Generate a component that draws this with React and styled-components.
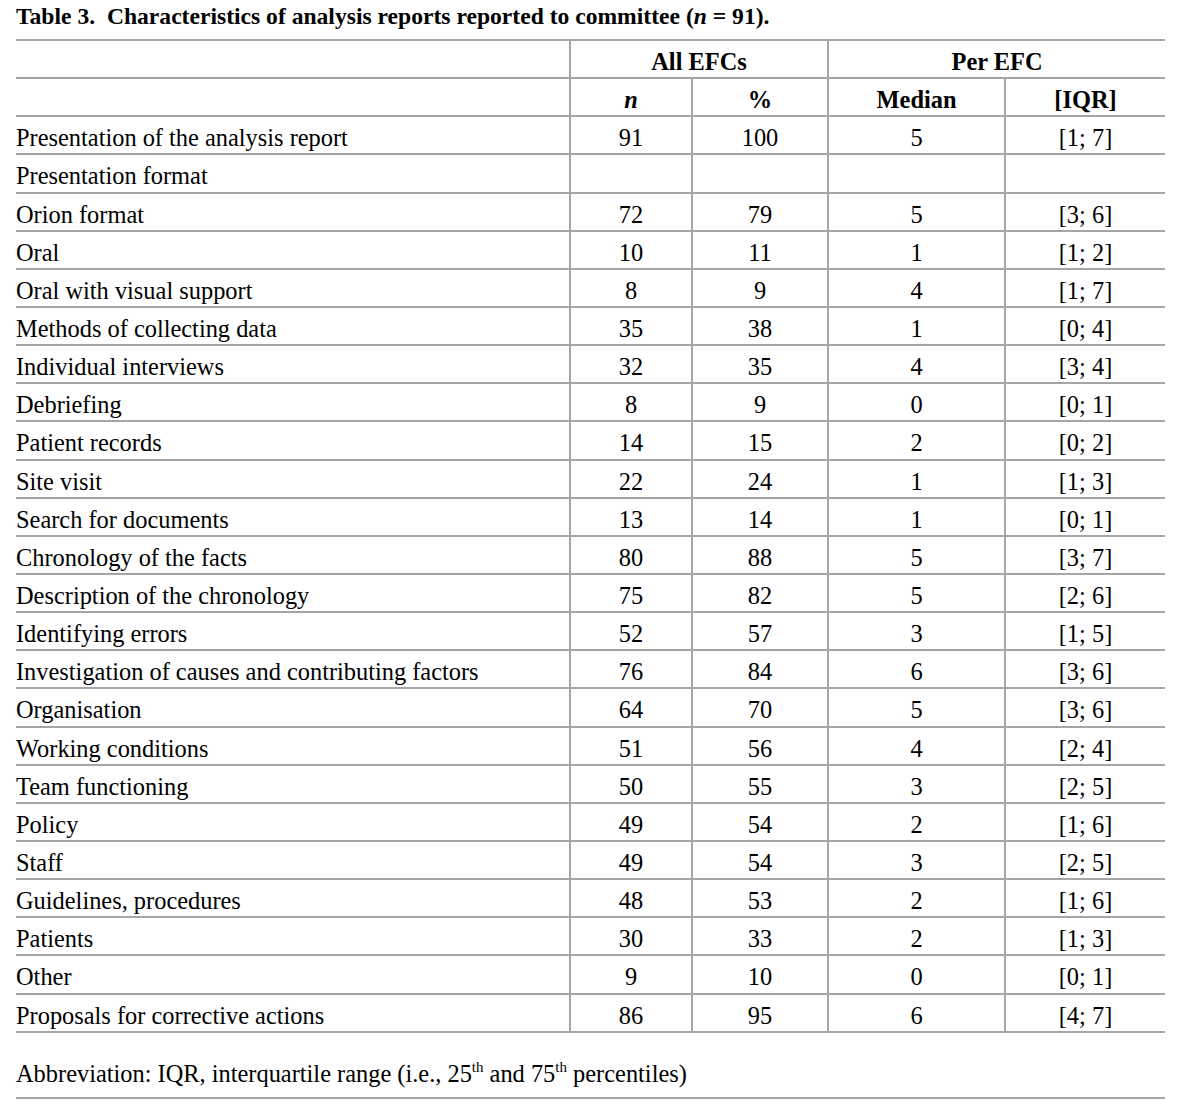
import React from 'react';
import styled, { createGlobalStyle } from 'styled-components';

const LINE = '#a6a6a6';

const ROWS = [
  ['Presentation of the analysis report', '91', '100', '5', '[1; 7]'],
  ['Presentation format', '', '', '', ''],
  ['Orion format', '72', '79', '5', '[3; 6]'],
  ['Oral', '10', '11', '1', '[1; 2]'],
  ['Oral with visual support', '8', '9', '4', '[1; 7]'],
  ['Methods of collecting data', '35', '38', '1', '[0; 4]'],
  ['Individual interviews', '32', '35', '4', '[3; 4]'],
  ['Debriefing', '8', '9', '0', '[0; 1]'],
  ['Patient records', '14', '15', '2', '[0; 2]'],
  ['Site visit', '22', '24', '1', '[1; 3]'],
  ['Search for documents', '13', '14', '1', '[0; 1]'],
  ['Chronology of the facts', '80', '88', '5', '[3; 7]'],
  ['Description of the chronology', '75', '82', '5', '[2; 6]'],
  ['Identifying errors', '52', '57', '3', '[1; 5]'],
  ['Investigation of causes and contributing factors', '76', '84', '6', '[3; 6]'],
  ['Organisation', '64', '70', '5', '[3; 6]'],
  ['Working conditions', '51', '56', '4', '[2; 4]'],
  ['Team functioning', '50', '55', '3', '[2; 5]'],
  ['Policy', '49', '54', '2', '[1; 6]'],
  ['Staff', '49', '54', '3', '[2; 5]'],
  ['Guidelines, procedures', '48', '53', '2', '[1; 6]'],
  ['Patients', '30', '33', '2', '[1; 3]'],
  ['Other', '9', '10', '0', '[0; 1]'],
  ['Proposals for corrective actions', '86', '95', '6', '[4; 7]'],
];

const GlobalStyle = createGlobalStyle`
  body {
    margin: 0;
    background: #fff;
    color: #000;
    font-family: "Liberation Serif", "Times New Roman", serif;
  }
`;

const Page = styled.div`
  width: 1149px;
  padding: 0 0 0 16px;
`;

const Title = styled.h1`
  margin: 0;
  height: 39px;
  padding-top: 3px;
  box-sizing: border-box;
  font-size: 23.6px;
  font-weight: bold;
  line-height: 26px;
  white-space: nowrap;
`;

const Table = styled.table`
  width: 1149px;
  border-collapse: collapse;
  table-layout: fixed;
  border-top: 2px solid ${LINE};
`;

const Cell = styled.td`
  height: 38.15px;
  box-sizing: border-box;
  padding: 8px 0 0;
  vertical-align: top;
  border-bottom: 2px solid ${LINE};
  border-left: ${(p) => (p.$first ? 'none' : `2px solid ${LINE}`)};
  text-align: ${(p) => (p.$first ? 'left' : 'center')};
  font-size: 24.4px;
  line-height: 26px;
  font-weight: ${(p) => (p.$head ? 'bold' : 'normal')};
  font-style: ${(p) => (p.$italic ? 'italic' : 'normal')};
  white-space: nowrap;
`;

const Footnote = styled.p`
  margin: 0;
  height: 66px;
  padding-top: 28px;
  box-sizing: border-box;
  font-size: 24.4px;
  line-height: 26px;
  border-bottom: 2px solid ${LINE};

  sup {
    font-size: 15px;
    line-height: 0;
    vertical-align: 10px;
  }
`;

export default function App() {
  return (
    <Page>
      <GlobalStyle />
      <Title>
        Table 3.&nbsp; Characteristics of analysis reports reported to committee (<i>n</i> = 91).
      </Title>
      <Table>
        <colgroup>
          <col style={{ width: 554 }} />
          <col style={{ width: 122 }} />
          <col style={{ width: 136 }} />
          <col style={{ width: 177 }} />
          <col style={{ width: 160 }} />
        </colgroup>
        <thead>
          <tr>
            <Cell $first />
            <Cell $head colSpan={2}>All EFCs</Cell>
            <Cell $head colSpan={2}>Per EFC</Cell>
          </tr>
          <tr>
            <Cell $first />
            <Cell $head $italic>n</Cell>
            <Cell $head>%</Cell>
            <Cell $head>Median</Cell>
            <Cell $head>[IQR]</Cell>
          </tr>
        </thead>
        <tbody>
          {ROWS.map((row) => (
            <tr key={row[0]}>
              {row.map((v, i) => (
                <Cell key={i} $first={i === 0}>{v}</Cell>
              ))}
            </tr>
          ))}
        </tbody>
      </Table>
      <Footnote>
        Abbreviation: IQR, interquartile range (i.e., 25<sup>th</sup> and 75<sup>th</sup> percentiles)
      </Footnote>
    </Page>
  );
}
